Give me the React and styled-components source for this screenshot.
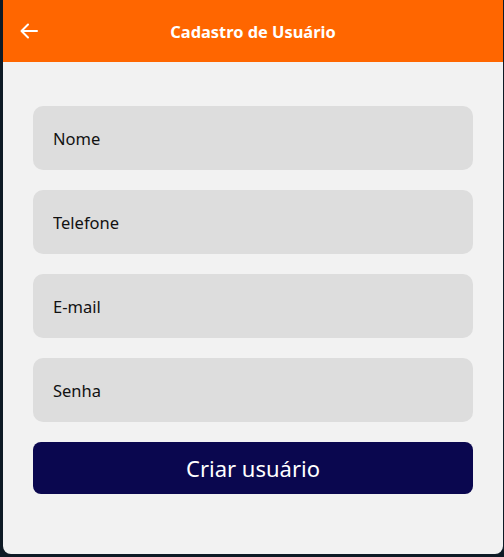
import React from "react";
import styled, { createGlobalStyle } from "styled-components";

const Global = createGlobalStyle`
  html, body { margin: 0; padding: 0; }
  body {
    background: #0e1a25;
    font-family: "Noto Sans", "Open Sans", sans-serif;
    width: 504px;
    height: 557px;
    overflow: hidden;
  }
`;

const Stage = styled.div`
  display: flex;
  padding-left: 3px;
  height: 557px;
  box-sizing: border-box;
`;

const Panel = styled.div`
  width: 500px;
  height: 554px;
  background: #f2f2f2;
  border-radius: 0 0 8px 8px;
  overflow: hidden;
  display: flex;
  flex-direction: column;
`;

const Header = styled.header`
  height: 62px;
  background: #ff6600;
  display: grid;
  grid-template-columns: 60px 1fr 60px;
  align-items: center;
  flex-shrink: 0;
`;

const BackButton = styled.button`
  border: 0;
  background: transparent;
  padding: 0 0 0 17px;
  display: flex;
  align-items: center;
  cursor: pointer;
`;

const Title = styled.h1`
  margin: 0;
  text-align: center;
  color: #ffffff;
  font-size: 16.4px;
  font-weight: 700;
`;

const Form = styled.form`
  display: flex;
  flex-direction: column;
  gap: 20px;
  padding: 44px 30px 0;
`;

const Field = styled.input`
  height: 64px;
  border: 0;
  border-radius: 10px;
  background: #dddddd;
  padding: 0 20px;
  font-family: inherit;
  font-size: 16.5px;
  color: #111;
  outline: none;
  box-sizing: border-box;
  &::placeholder { color: #111111; opacity: 1; }
`;

const Submit = styled.button`
  height: 52px;
  border: 0;
  border-radius: 8px;
  background: #0a074f;
  color: #ffffff;
  font-family: inherit;
  font-size: 22px;
  cursor: pointer;
`;

export default function App() {
  return (
    <>
      <Global />
      <Stage>
        <Panel>
          <Header>
            <BackButton type="button" aria-label="Voltar">
              <svg width="18" height="16" viewBox="0 0 18 16" fill="none" stroke="#fff" strokeWidth="2" strokeLinecap="round" strokeLinejoin="round">
                <path d="M17 8H2" />
                <path d="M8 1.5L1.5 8 8 14.5" />
              </svg>
            </BackButton>
            <Title>Cadastro de Usuário</Title>
            <span />
          </Header>
          <Form onSubmit={(e) => e.preventDefault()}>
            <Field placeholder="Nome" />
            <Field placeholder="Telefone" />
            <Field placeholder="E-mail" />
            <Field placeholder="Senha" type="password" />
            <Submit type="submit">Criar usuário</Submit>
          </Form>
        </Panel>
      </Stage>
    </>
  );
}
